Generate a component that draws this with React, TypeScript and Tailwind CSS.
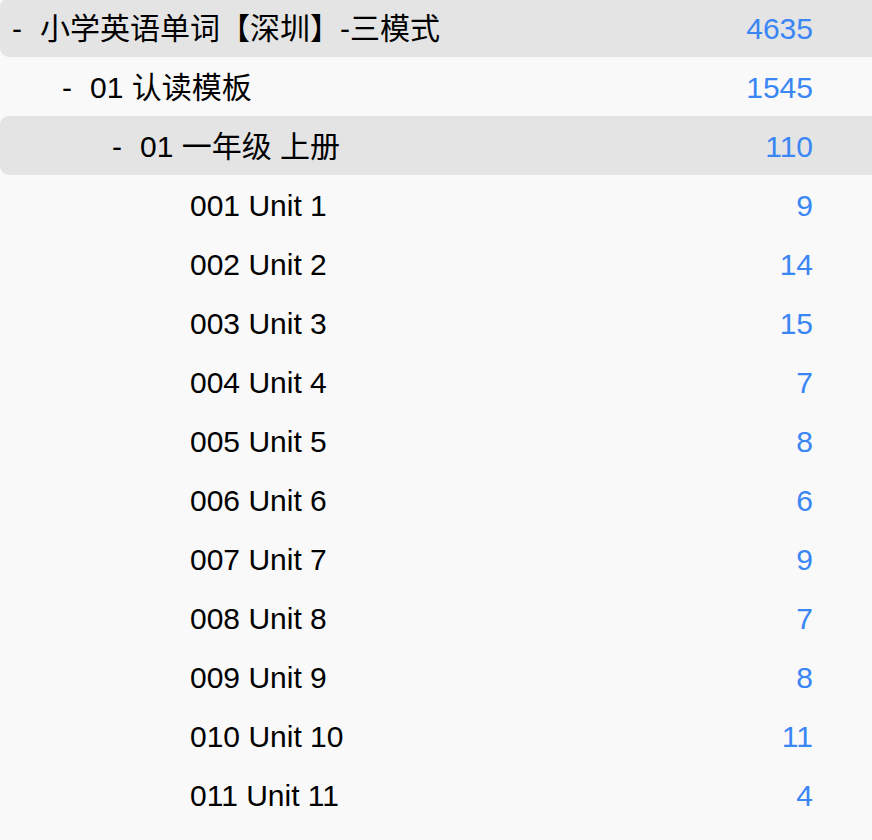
import React from "react";

type Row = { level: number; label: string; count: number; toggle: boolean; hl: boolean };

const rows: Row[] = [
  { level: 0, label: "小学英语单词【深圳】-三模式", count: 4635, toggle: true, hl: true },
  { level: 1, label: "01 认读模板", count: 1545, toggle: true, hl: false },
  { level: 2, label: "01 一年级 上册", count: 110, toggle: true, hl: true },
  { level: 3, label: "001 Unit 1", count: 9, toggle: false, hl: false },
  { level: 3, label: "002 Unit 2", count: 14, toggle: false, hl: false },
  { level: 3, label: "003 Unit 3", count: 15, toggle: false, hl: false },
  { level: 3, label: "004 Unit 4", count: 7, toggle: false, hl: false },
  { level: 3, label: "005 Unit 5", count: 8, toggle: false, hl: false },
  { level: 3, label: "006 Unit 6", count: 6, toggle: false, hl: false },
  { level: 3, label: "007 Unit 7", count: 9, toggle: false, hl: false },
  { level: 3, label: "008 Unit 8", count: 7, toggle: false, hl: false },
  { level: 3, label: "009 Unit 9", count: 8, toggle: false, hl: false },
  { level: 3, label: "010 Unit 10", count: 11, toggle: false, hl: false },
  { level: 3, label: "011 Unit 11", count: 4, toggle: false, hl: false },
];

const indent = ["pl-[12px]", "pl-[62px]", "pl-[112px]", "pl-[162px]"];

export default function App() {
  return (
    <div
      className="min-h-[840px] w-[872px] bg-[#f9f9f9] overflow-hidden"
      style={{ fontFamily: '"Liberation Sans", Arial, "Noto Sans CJK SC", sans-serif' }}
    >
      <div className="-mt-[2px] flex flex-col">
        {rows.map((r, i) => (
          <div
            key={i}
            className={`flex h-[59px] items-center pt-[3px] pr-[59px] text-[30px] leading-none ${indent[r.level]} ${
              r.hl ? "bg-[#e4e4e4] rounded-l-[9px]" : ""
            }`}
          >
            <span className="w-[28px] shrink-0 text-black">{r.toggle ? "-" : ""}</span>
            <span className="flex-1 text-black whitespace-nowrap">{r.label}</span>
            <span className="text-[#3a86f5]">{r.count}</span>
          </div>
        ))}
      </div>
    </div>
  );
}
